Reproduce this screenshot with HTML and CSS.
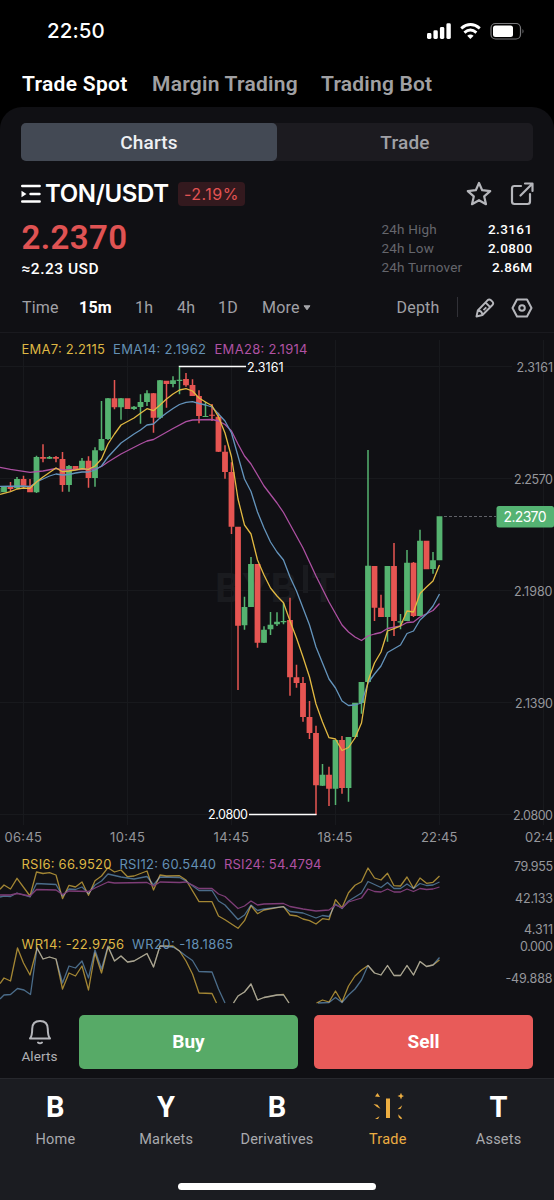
FILE: index.html
```html
<!DOCTYPE html>
<html lang="en">
<head>
<meta charset="utf-8">
<title>TON/USDT</title>
<link rel="stylesheet" href="styles.css">
</head>
<body>
<header class="status">
  <span class="clock">22:50</span>
  <svg class="status-icons" width="100" height="20" viewBox="0 0 100 20">
    <g fill="#fff">
      <rect x="0" y="12" width="4.400" height="6" rx="1.400"/>
      <rect x="6.400" y="9.300" width="4.400" height="8.700" rx="1.400"/>
      <rect x="12.900" y="6" width="4.400" height="12" rx="1.400"/>
      <rect x="19.400" y="2.300" width="4.400" height="15.700" rx="1.400"/>
      <path d="M43.400 18l-3.200-3.200q3.200-2.600 6.400 0z"/>
    </g>
    <path d="M34.200 7.300q9.300-7.600 18.600 0M37.400 11.600q6-5 12 0" fill="none" stroke="#fff" stroke-width="2.900"/>
    <rect x="64" y="2.500" width="29.500" height="15.500" rx="4.500" fill="none" stroke="#77777a" stroke-width="1.200"/>
    <rect x="66" y="4.500" width="20" height="11.500" rx="2.500" fill="#fff"/>
    <path d="M95.500 8q2 2.200 0 4.600z" fill="#77777a"/>
  </svg>
</header>
<nav class="modes">
  <span class="mode mode-spot">Trade Spot</span>
  <span class="mode mode-margin">Margin Trading</span>
  <span class="mode mode-bot">Trading Bot</span>
</nav>
<main class="panel">
  <div class="segmented"><span class="segment segment-on">Charts</span><span class="segment">Trade</span></div>
  <div class="pair">
    <svg width="20" height="20" viewBox="0 0 20 20"><path d="M1.200 2h17.500M9.500 10h9M1.200 17.500h17.500" stroke="#fff" stroke-width="2.400" stroke-linecap="round"/><path d="M.5 6.800L5.500 10 .5 13.200z" fill="#fff"/></svg>
    <h1 class="pair-name">TON/USDT</h1>
    <span class="change">-2.19%</span>
    <svg class="star" width="26" height="26" viewBox="0 0 26 26" fill="none" stroke="#b5b6bb" stroke-width="2.200" stroke-linejoin="round"><path d="M13 2l3.200 7.200 8 .9-6 5.300 1.800 7.800-7-4-7 4 1.800-7.800-6-5.300 8-.9z"/></svg>
    <svg width="24" height="24" viewBox="0 0 24 24" fill="none" stroke="#b5b6bb" stroke-width="2.200" stroke-linejoin="round" stroke-linecap="round"><path d="M11 4H4.500Q2 4 2 6.500v13Q2 22 4.500 22h13q2.500 0 2.500-2.500V12M15 1.500h7.500V9M22 2L10.500 13.500"/></svg>
  </div>
  <div class="summary">
    <div><div class="price">2.2370</div><div class="fiat">≈2.23 USD</div></div>
    <dl class="stats">
      <dt>24h High</dt><dd>2.3161</dd>
      <dt>24h Low</dt><dd>2.0800</dd>
      <dt>24h Turnover</dt><dd>2.86M</dd>
    </dl>
  </div>
  <div class="frames">
    <span class="frame-time">Time</span><span class="frame-on">15m</span><span class="frame-hour">1h</span><span class="frame-four">4h</span><span class="frame-day">1D</span>
    <span class="frame-more">More<svg width="8" height="7" viewBox="0 0 8 7"><path d="M1 1.800h6L4 5.800z" fill="#a5a6aa" stroke="#a5a6aa" stroke-linejoin="round"/></svg></span>
    <span class="frame-depth">Depth</span><i class="rule"></i>
    <svg class="pencil" width="20" height="20" viewBox="0 0 20 20" fill="none" stroke="#b5b6bb" stroke-width="1.900" stroke-linejoin="round"><path d="M1.500 18.500l1.300-6L12.500 2.300q1.700-1.500 3.500 0l1.400 1.300q1.600 1.700 0 3.400L7.500 17zM10.500 4.500l4.700 4.700M8.500 12.200l2.800-2.800M3 12.800q4-.2 4.300 4"/></svg>
    <svg class="settings" width="22" height="20" viewBox="0 0 22 20" fill="none" stroke="#b5b6bb" stroke-width="2" stroke-linejoin="round"><path d="M6 1.500h10l4.500 8.500L16 18.500H6L1.500 10z"/><circle cx="11" cy="10" r="2.800"/></svg>
  </div>
  <svg class="chart" width="554" height="672" viewBox="0 332 554 672">
    <path class="edge" d="M0 332.500H554"/>
    <path class="grid" d="M0 366.500H512M0 478.500H512M0 590.500H512M0 702.500H512M0 814.500H512M23.500 340V825M127.500 340V825M231.500 340V825M335.500 340V825M439.500 340V825M543.500 340V825"/>
    <g class="watermark">
      <text x="215" y="602" font-size="40" textLength="82" lengthAdjust="spacingAndGlyphs">BYB</text>
      <rect x="303" y="565" width="5" height="28"/>
      <text x="311" y="602" font-size="40" textLength="25" lengthAdjust="spacingAndGlyphs">T</text>
    </g>
    <path class="wick up" d="M17 477V489M36.500 455.700V493M49.500 456V459M69 465V491.700M82 458V469M95 447.300V486.700M101.500 401V451M108 398V440M121 398V419.700M134 406V410M140.500 394.300V423.700M147 390.300V406M160 380V419M173 376.300V387.300M179.500 366.700V394.300M205.500 401.700V417M244.500 596.700V629.700M251 557V607M264 626.300V643M270.500 612V635M277 612.300V626M283.500 602.700V624.300M322.500 764V786M335.500 740V805M348.500 737V801.700M361.500 682V713.700M368 450V682M387.500 566V641.700M400.500 614V629.300M407 550V621M420 529.700V616M433 552V573.700"/>
    <path class="wick down" d="M10.500 482V491M23.500 475.700V488M30 479V492M43 444.300V462.300M56 456V462.300M62.500 452V491.700M88.500 456.300V487.700M114.500 380V409.300M153.500 393V432.700M166.500 381V407.700M186 373V386.700M192.500 379.300V396M199 390.300V423.300M212 404V421M218.500 412.700V452M225 445.300V478.700M231.500 462.300V534M238 527V690M257.500 564V647.700M290 597.700V695.700M296.500 664.700V687.700M303 677V721.700M309.500 701V739M316 725.700V815M329 766.700V806M342 736V793.700M374.500 566V621M381 594.700V617M394 543V636M413.500 562V617"/>
    <path class="body up" d="M-2.500 488V493M4 486.700V492.300M17 479V488.300M36.500 457V492.300M49.500 457V458.700M69 466V485M82 460.700V469M95 450.300V478M101.500 439V450.300M108 398.300V439M121 398.300V407.300M134 406.700V409M140.500 402V407M147 393.300V402M160 380.300V417.700M173 380.300V384M179.500 379.700V381M205.500 416V417M244.500 607V625.300M251 564V607M264 629.700V642.700M270.500 624.700V629.300M277 621.700V624.300M283.500 621V622.300M322.500 774.700V785.700M335.500 740V788.700M348.500 737V788M355 702.700V737M361.500 682V703M368 565.700V682M387.500 566V617M400.500 621.300V622.400M407 562.700V621M420 540.700V616M433 560.300V569M439.500 516.300V560.300"/>
    <path class="body down" d="M10.500 486.700V489M23.500 479V485.700M30 485.700V492.300M43 457V458.700M56 457V458.700M62.500 459V485M75.500 466V469M88.500 460.700V478M114.500 398.300V407.300M127.500 398.300V409M153.500 393.300V417.700M166.500 380.700V384M186 379V385.300M192.500 385V396M199 396V416M212 414.700V415.800M218.500 416.700V451.700M225 451.700V472M231.500 472V526.700M238 526.700V625.700M257.500 564V642.700M290 620V677.300M296.500 677.300V683M303 683V717M309.500 717V733M316 733V785.300M329 774.700V788.700M342 740V788M374.500 566V607.700M381 607.700V617M394 566V621M413.500 562.700V616M426.500 540.700V569.300"/>
    <path class="line magenta" d="M0 467.300L10.500 469.300 30 472.300 43 471 56 468.500 62.500 470 95 469 101.500 466.500 108 462 121 454 140.500 444 147 441 153.500 439.500 173 428.500 186 421.700 192.500 420 212 419.500 218.500 421 225 424.500 231.500 431 238 444 244.500 456 251 464 264 486 277 503 283.500 512.500 303 548 316 576 329 602 342 625 348.500 632 355 637 361.500 640.500 368 636 374.500 634 381 632.500 387.500 628.500 400.500 626 407 622.500 413.500 622 420 617 433 610.500 439.500 603.500"/>
    <path class="line blue" d="M0 486.300L23.500 486 30 486.700 36.500 482 43 479 49.500 476 56 474 62.500 475 69 474.500 75.500 473 82 472 88.500 472 95 470 101.500 466 108 457 114.500 450 121 443 127.500 438.500 134 434 140.500 430 147 425 153.500 424 160 418 166.500 413 173 408.500 179.500 404.500 186 402.300 192.500 401.700 199 403.500 205.500 405 212 407 218.500 414 225 421 231.500 433 238 456 244.500 479 251 491.500 257.500 512 264 528 270.500 542 277 552 283.500 560 290 577 296.500 591 303 608 309.500 625 316 647 322.500 663 329 679 335.500 688 342 701 348.500 705.500 355 705 361.500 703 368 683 374.500 674 381 666 387.500 652.500 400.500 645 407 633.500 413.500 631 420 620 426.500 614 433 606 439.500 594"/>
    <path class="line gold" d="M0 494.300L10.500 491.700 17 489 23.500 488 30 488.300 36.500 482 43 477 49.500 472.500 56 468 62.500 471.700 69 471 75.500 470 82 468.700 88.500 469.300 95 466 101.500 459 108 444 114.500 434 121 425 127.500 421.500 134 418 140.500 413.300 147 408.700 153.500 410.700 160 405 166.500 399 173 394 179.500 390 186 388.700 192.500 391 199 398 205.500 402 212 405.700 218.500 417 225 433 231.500 457 238 499 244.500 525 251 534 257.500 560 264 575 270.500 588 277 596 283.500 602.700 290 621 296.500 638 303 657 309.500 677 316 704 322.500 722 329 737.700 335.500 739 342 750.500 348.500 747.500 355 738 361.500 723 368 681 374.500 663 381 652 387.500 631 394 628.700 400.500 626 407 611 413.500 612 420 593.500 426.500 587 433 581 439.500 565"/>
    <path class="marker" d="M179.500 367V366.500H246M249 814.500H316.500"/>
    <text class="extreme" x="247" y="371.500" textLength="36.500">2.3161</text>
    <text class="extreme" x="208" y="819" textLength="40">2.0800</text>
    <path class="last" d="M444 516.500H496"/>
    <rect x="496.500" y="506" width="57.500" height="21.500" rx="2.500" fill="#55b373"/>
    <text class="tag" x="503.500" y="522" textLength="43">2.2370</text>
    <g class="axis" text-anchor="end">
      <text x="553" y="371.500" textLength="36.500">2.3161</text>
      <text x="553" y="483.500" textLength="39">2.2570</text>
      <text x="552.500" y="595.500" textLength="38.500">2.1980</text>
      <text x="553" y="707.500" textLength="38">2.1390</text>
      <text x="553" y="819.500" textLength="40">2.0800</text>
      <text x="553" y="870.500" textLength="39">79.955</text>
      <text x="553" y="902.500" textLength="38">42.133</text>
      <text x="553" y="933.500" textLength="29">4.311</text>
      <text x="553" y="951" textLength="33">0.000</text>
      <text x="552.500" y="982.500" textLength="47">-49.888</text>
    </g>
    <g class="times">
      <text x="4.500" y="841.500" textLength="37.500">06:45</text>
      <text x="110" y="841.500" textLength="35">10:45</text>
      <text x="213.500" y="841.500" textLength="35.500">14:45</text>
      <text x="317.500" y="841.500" textLength="35">18:45</text>
      <text x="421" y="841.500" textLength="36.500">22:45</text>
      <text x="525" y="841.500" textLength="28.500">02:4</text>
    </g>
    <g class="faint">
      <path class="line gold" d="M0 889.300L4 885 10.500 889 17 878.300 30 896 36.500 872 43 873.500 49.500 872.700 56 875 62.500 898.700 69 885.300 75.500 887 82 882 88.500 895.300 95 880.700 101.500 876 108 867.700 114.500 872 121 870 127.500 876.700 134 876 147 871 153.500 890 160 875 166.500 876 179.500 875.700 186 880 199 901.700 212 901.700 218.500 916 225 919.700 238 928.300 244.500 920.700 251 905.700 257.500 913.700 264 910 277 907.700 283.500 906.700 290 915 297 916 303 919 309.500 920.700 316 924 322.500 918.700 329 919.700 335.500 899.700 342 907.700 348.500 892.700 355 885.300 361.500 881.700 368 868 374.500 878 381 880 387.500 873.300 394 885.700 400.500 886 407 877 413.500 888.300 420 878 426.500 883.300 433 882.300 439.500 876"/>
      <path class="line blue" d="M0 897L4 896 10.500 896.500 17 893 30 897 36.500 883.500 56 884.500 62.500 896 69 889 75.500 889.500 82 887 88.500 893.500 95 885 101.500 881 108 874 121 877 134 879 147 876.500 153.500 885 160 877 179.500 877.500 186 881 199 890.500 212 890.500 218.500 901 225 905 238 919.500 244.500 915 251 905 257.500 910.500 264 909 283.500 906.700 290 911.500 303 913 316 918 322.500 915.500 329 916.500 335.500 904 342 908.500 348.500 901 355 897 361.500 893 368 881.500 381 887.500 387.500 882.500 394 888.500 400.500 888.500 407 884 413.500 888.500 420 883.500 426.500 885.500 433 885 439.500 882"/>
      <path class="line magenta" d="M0 895L10.500 895 17 893.500 30 896 36.500 889.500 56 890 62.500 894.500 69 891 88.500 891.500 95 888 108 882 114.500 883 147 882.500 153.500 886 160 882 179.500 882.500 186 882 192.500 885 199 888.500 212 888.500 218.500 894 225 896.500 238 908.500 244.500 906 251 901 257.500 905 264 904 283.500 903.500 290 906.500 303 909 316 911 329 910 335.500 905 342 908 348.500 902 361.500 898 368 889 374.500 891.500 381 892 387.500 889 394 892 400.500 892 407 889 413.500 891.500 420 888.500 426.500 889.500 433 889 439.500 887"/>
      <path class="line gold" d="M0 983.500L4 978 10.500 981 17.500 948 23.500 963 30 975 37 948 43 959 49.500 957 56 959 62.500 989 69 973 75.500 976 82 966 88.500 990 95 953 101.500 973 108 947 114.500 961 121 956 127.500 962 134 961 147 953.500 153.500 967 160 946 173 946 179.500 951 186 961 192.500 974 199 993 212 993.500 216.500 1003M233.500 1003L238 996 244.500 992 251 984 257.500 1000 264 997.500 277 995 283.500 994.500 289 1003M316.500 1003L322.500 1000 329 1002 335.500 991 342 1002 348.500 986 355 976 361.500 970 368 965.500 374.500 973 381 975 387.500 965.500 394 975.500 400.500 975.500 407 965.500 413.500 975 420 961.500 426.500 966.500 433 965 439.500 960"/>
      <path class="line blue" d="M0 999L4 995 10.500 994.500 17.500 988.500 24 990 30.500 994.500 37 948 43 959 49.500 957 56 959 62.500 983 69 966 75.500 968 82 961 88.500 978 95 950 101.500 969 108 946 114.500 961 121 956 127.500 962 134 961 147 953.500 153.500 967 160 946 173 947 179.500 951 186 956 192.500 960.500 199 971.500 212 972 218.500 989 225 1003M233.500 1003L238 996 244.500 992 251 984 257.500 1000 264 997.500 277 995 283.500 995 289 1003M318 1003L329 1002.500 335.500 997.500 342 1002.500 348.500 995 355 989 361.500 980 368 965.500 374.500 973 381 975 387.500 965.500 394 975.500 400.500 975.500 407 965.500 413.500 975 420 961.500 426.500 966.500 433 965 439.500 957.500"/>
    </g>
    <g class="legend">
      <text class="gold" x="21.500" y="353.500" textLength="83.500">EMA7: 2.2115</text>
      <text class="blue" x="113" y="353.500" textLength="93">EMA14: 2.1962</text>
      <text class="magenta" x="214.500" y="353.500" textLength="93">EMA28: 2.1914</text>
      <text class="gold" x="21.500" y="868.500" textLength="90">RSI6: 66.9520</text>
      <text class="blue" x="119.500" y="868.500" textLength="96.500">RSI12: 60.5440</text>
      <text class="magenta" x="224" y="868.500" textLength="97.500">RSI24: 54.4794</text>
      <text class="gold" x="21.500" y="949" textLength="102.500">WR14: -22.9756</text>
      <text class="blue" x="132" y="949" textLength="101">WR20: -18.1865</text>
    </g>
  </svg>
  <div class="actions">
    <div class="alerts">
      <svg width="24" height="27" viewBox="0 0 24 27" fill="none" stroke="#b5b6bb" stroke-width="2" stroke-linecap="round" stroke-linejoin="round"><path d="M2 19.500Q4.200 17 4.200 10q0-8 7.800-8t7.800 8q0 7 2.200 9.500zM10 23.500q2 1.600 4 0"/></svg>
      <span>Alerts</span>
    </div>
    <button class="order buy">Buy</button>
    <button class="order sell">Sell</button>
  </div>
</main>
<footer class="dock">
  <nav class="tabs">
    <a class="tab"><b>B</b><span>Home</span></a>
    <a class="tab"><b>Y</b><span>Markets</span></a>
    <a class="tab"><b>B</b><span>Derivatives</span></a>
    <a class="tab tab-on"><svg width="32" height="28" viewBox="0 0 32 28" fill="#edae42"><rect x="14" y="6.500" width="4" height="19.500"/><path d="M29 .8l1 2.400 2 .8-2 1-1 2.500L28 5l-2.500-1L28 3zM3 4.500L5.500 1 8 5zM1.500 12l4 .8L8.500 16.800 5 15zM3 27l4.500-2.700-1.500 2.700zM25.500 17.300l4.700-4-1.500 3.500zM26.200 22.200l4 4-1.200 1-2.300-2z"/></svg><span>Trade</span></a>
    <a class="tab"><b>T</b><span>Assets</span></a>
  </nav>
  <div class="home-bar"></div>
</footer>
</body>
</html>
```
FILE: styles.css
```css
* { box-sizing: border-box; }
body { margin: 0; width: 554px; height: 1200px; overflow: hidden; background: #000; color: #fff; font-family: Roboto, "Noto Sans", sans-serif; }
svg { display: block; flex: none; }
.status { display: flex; justify-content: space-between; align-items: center; height: 61px; padding: 0 27px 0 47px; font: 500 20.500px Inter, sans-serif; }
.clock { letter-spacing: .1px; }
.modes { display: flex; align-items: center; height: 46px; padding: 0 22px; font-size: 21px; font-weight: 600; line-height: 46px; color: #a0a0a3; white-space: nowrap; }
.mode-spot { width: 130px; color: #fff; letter-spacing: .3px; }
.mode-margin { width: 169px; letter-spacing: .25px; }
.mode-bot { letter-spacing: .2px; }
.panel { height: 971px; background: #101014; border-radius: 22px 22px 0 0; overflow: hidden; padding-top: 16px; }
.segmented { display: flex; height: 38px; margin: 0 21px; border-radius: 5px; background: #1c1b20; }
.segment { flex: 1; border-radius: 5px; text-align: center; font-size: 19px; font-weight: 500; line-height: 39px; color: #a0a1a6; letter-spacing: .2px; }
.segment-on { background: #434954; color: #eef0f3; }
.pair { display: flex; align-items: center; height: 33px; margin: 16px 20px 0 21px; }
.pair-name { margin: 0 7px 0 4px; width: 126px; font: 600 24px/33px Inter, sans-serif; letter-spacing: -.35px; white-space: nowrap; }
.change { width: 67px; height: 24px; border-radius: 4px; background: #33191e; color: #e25353; text-align: center; font: 400 16px/24px Inter, sans-serif; letter-spacing: .5px; }
.star { margin: 0 18px 0 auto; }
.summary { display: flex; justify-content: space-between; height: 70px; padding: 6px 21.500px 0; }
.price { font-size: 33px; line-height: 44px; font-weight: 600; color: #e05353; letter-spacing: .4px; }
.fiat { font-size: 15.500px; font-weight: 500; line-height: 18px; letter-spacing: .5px; }
.stats { display: grid; grid-template-columns: 90px 61px; height: 57px; margin: 4px 0 0; font-size: 13.500px; line-height: 19px; letter-spacing: .4px; }
.stats dt { color: #65666c; white-space: nowrap; letter-spacing: .2px; }
.stats dd { margin: 0; text-align: right; font-weight: 500; }
.frames { display: flex; align-items: center; height: 52px; padding: 2px 21px 0 22px; font-size: 16px; color: #a0a1a6; white-space: nowrap; letter-spacing: .2px; }
.frame-time { width: 57px; }
.frame-on { width: 56px; color: #fff; font-weight: 700; }
.frame-hour { width: 42px; }
.frame-four { width: 41px; }
.frame-day { width: 44px; }
.frame-more { display: flex; align-items: center; gap: 3px; width: 134.500px; }
.frame-depth { width: 60px; }
.rule { width: 1px; height: 20px; background: #313137; margin-right: 17px; }
.pencil { margin: 1px auto 0 0; }
.settings { margin-top: 2px; }
.edge { stroke: #1a1a1f; }
.grid { stroke: #18191d; }
.watermark { fill: #1a1b1f; font-family: Inter, sans-serif; font-weight: 700; }
.wick { stroke-width: 1.500; fill: none; }
.body { stroke-width: 5.800; fill: none; }
.up { stroke: #55b370; }
.down { stroke: #e65552; }
.line { fill: none; stroke-width: 1.300; stroke-linejoin: round; }
.line.gold { stroke: #e2b942; }
.line.blue { stroke: #6494bc; }
.line.magenta { stroke: #ad50a2; }
.faint { opacity: .7; }
.faint .blue { mix-blend-mode: screen; }
.marker { stroke: #fff; stroke-width: 1.500; fill: none; }
.last { stroke: #606268; stroke-dasharray: 3 2; }
.chart text { font-family: Inter, sans-serif; }
.extreme { font-size: 12.500px; fill: #fff; }
.tag { font-size: 14px; fill: #fff; }
.axis { font-size: 12.500px; fill: #96979c; }
.times { font-size: 13px; fill: #96979c; }
.legend { font-size: 13px; }
.legend .gold { fill: #deb744; }
.legend .blue { fill: #6490b5; }
.legend .magenta { fill: #b052a3; }
.actions { display: flex; height: 74px; padding: 10.500px 21px 0 0; }
.alerts { display: flex; flex-direction: column; align-items: center; gap: 2px; width: 79px; padding-top: 4px; font-size: 13.500px; line-height: 16px; color: #b0b1b5; letter-spacing: .1px; }
.order { flex: 1; height: 54px; padding: 0; border: 0; border-radius: 5px; color: #fff; font: 700 19px/54px Roboto, sans-serif; }
.buy { margin-right: 16px; background: #57aa67; }
.sell { background: #e85b59; }
.dock { height: 122px; background: #1b1c21; border-top: 1px solid #27282d; }
.tabs { display: grid; grid-template-columns: repeat(5, 1fr); height: 104px; }
.tab { display: flex; flex-direction: column; align-items: center; padding-top: 13px; font-size: 14.500px; line-height: 20px; color: #a9aaae; letter-spacing: .2px; }
.tab b { height: 37px; color: #fff; font: 700 29px/30px Roboto, sans-serif; }
.tab span { padding-top: 1px; }
.tab svg { height: 28px; margin-bottom: 9px; }
.tab-on { color: #edae42; }
.home-bar { width: 198px; height: 7px; margin: 0 auto; border-radius: 4px; background: #fff; }
```
